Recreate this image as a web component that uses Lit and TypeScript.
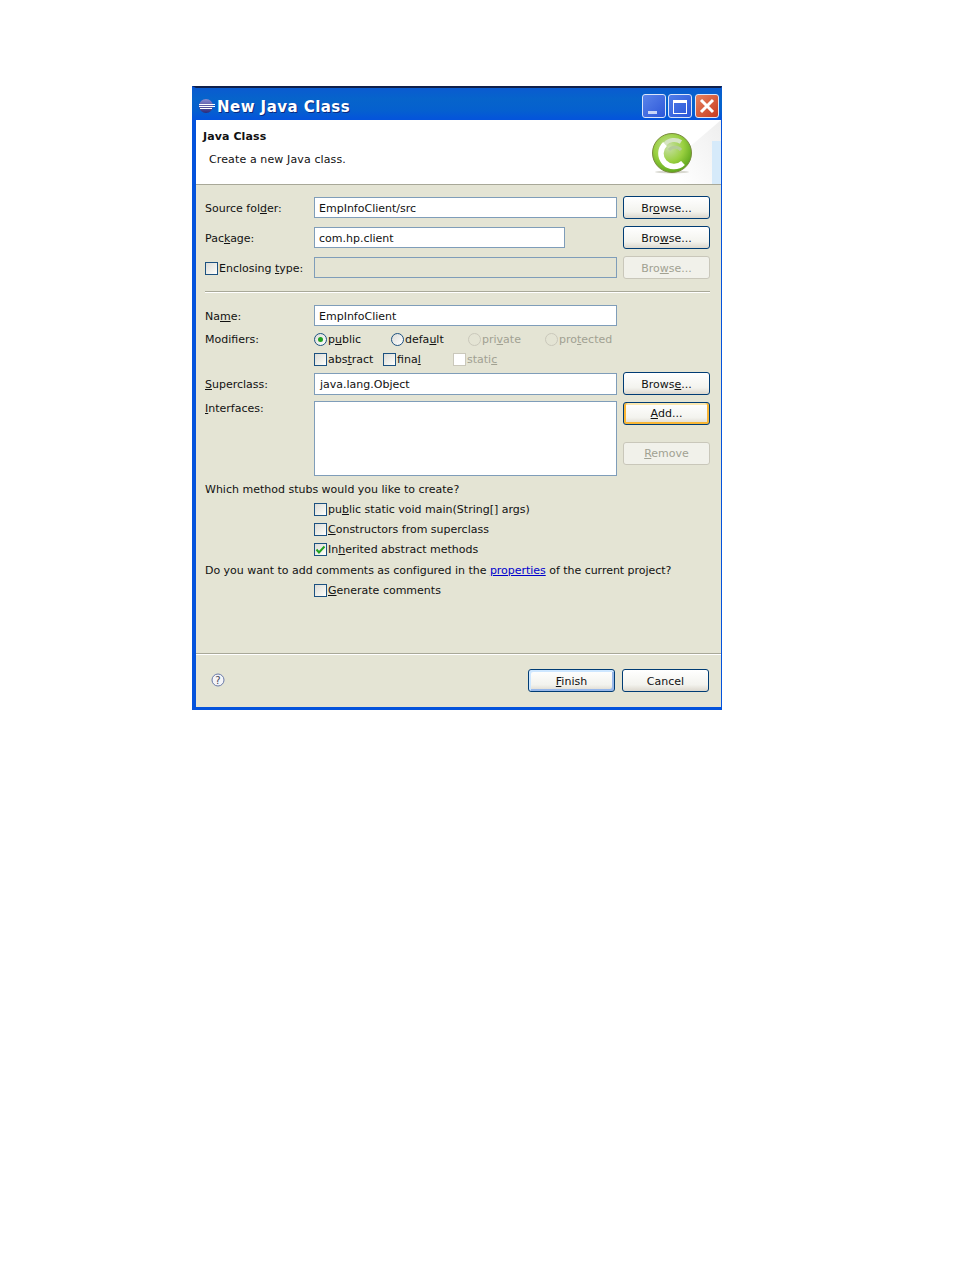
import { LitElement, html, css, svg } from "lit";
import { customElement } from "lit/decorators.js";

const lbl = (before: string, u: string, after: string) => html`<span>${before}<u>${u}</u>${after}</span>`;

const chk = (checked = false, disabled = false) => html`<span class="chk ${disabled ? "dis" : ""}">${checked
  ? svg`<svg width="11" height="11" viewBox="0 0 11 11"><path d="M1.5 5.5 L4 8.5 L9.5 2.5" fill="none" stroke="#21a121" stroke-width="2"/></svg>`
  : ""}</span>`;

const radio = (checked = false, disabled = false) => html`<span class="radio ${disabled ? "dis" : ""}">${checked ? html`<span class="dot"></span>` : ""}</span>`;

@customElement("app-root")
export class AppRoot extends LitElement {
  static styles = css`
    :host { display: block; width: 954px; height: 1270px; background: #fff; font-family: "DejaVu Sans", sans-serif; font-size: 11px; color: #111; overflow: hidden; }
    .window { margin: 86px 0 0 192px; width: 530px; height: 624px; box-sizing: border-box; display: flex; flex-direction: column; background: #e4e4d4; border-left: 4px solid #0453dc; border-right: 1px solid #0453dc; border-bottom: 3px solid #0453dc; border-top: 2px solid #10204a; }
    .title { height: 32px; margin-left: -4px; margin-right: -1px; padding: 3px 3px 0 7px; box-sizing: border-box; display: flex; align-items: center; background: linear-gradient(180deg, #0a5bd0 0%, #0664cb 35%, #0560cf 70%, #0453dc 100%); flex: none; }
    .title .t { font-weight: 700; font-size: 15px; letter-spacing: 0.45px; padding-top: 2px; color: #fff; text-shadow: 1px 1px 0 #0a2a80; flex: 1; white-space: nowrap; margin-left: 1px; }
    .wb { width: 24px; height: 24px; box-sizing: border-box; border: 1px solid #dce6fa; border-radius: 3px; display: flex; flex: none; margin-left: 2px; }
    .wb svg { display: block; }
    .wb.min { background: linear-gradient(135deg, #5a84ea, #2d57d8); }
    .wb.max { background: linear-gradient(135deg, #4f7ce8, #2a56d8); margin-right: 1px; }
    .wb.close { background: linear-gradient(135deg, #e8835f, #c63a20); }
    .banner { height: 65px; background: #fff; border-bottom: 1px solid #a8a898; box-sizing: border-box; position: relative; flex: none; padding: 8px 0 0 7px; overflow: hidden; }
    .banner .h { font-weight: 700; font-size: 11px; line-height: 18px; letter-spacing: .1px; }
    .banner .s { margin: 5px 0 0 6px; line-height: 18px; letter-spacing: .12px; }
    .banner svg { position: absolute; right: 0; top: 0; }
    .form { flex: none; padding: 12px 11px 0 9px; display: grid; grid-template-columns: 103px 303px 87px; column-gap: 6px; }
    .form > .l { display: flex; align-items: center; white-space: nowrap; padding-top: 1px; box-sizing: border-box; }
    .input { box-sizing: border-box; height: 21px; border: 1px solid #7f9db9; background: #fff; padding: 1px 4px 0; display: flex; align-items: center; white-space: nowrap; }
    .input.off { background: #e4e4d4; }
    .input.short { width: 251px; }
    .input.tall { height: 22px; margin-top: 4px; padding-left: 5px; }
    .btn { box-sizing: border-box; height: 23px; padding-top: 1px; border: 1px solid #003c74; border-radius: 3px; background: linear-gradient(180deg, #fff 0%, #f3f3ee 70%, #dcd8ce 100%); display: flex; align-items: center; justify-content: center; white-space: nowrap; color: #111; }
    .btn.r { margin: -1px 0 8px; }
    .btn.sup { margin-top: 3px; }
    .btn.off { border-color: #c9c7ba; color: #a1a192; background: #f1f1ea; }
    .btn.focus { box-shadow: inset 2px 0 0 #f8b636, inset -2px 0 0 #f8b636, inset 0 -2px 0 #f8b636, inset 0 2px 0 #fce8b0; }
    .btn.def { box-shadow: inset 2px 2px 0 #cee7ff, inset -2px -2px 0 #98b8ea; }
    .off-t { color: #a1a192; }
    .l.r, .input.r { margin-bottom: 9px; }
    .sep { grid-column: 1 / -1; height: 2px; background: linear-gradient(180deg, #a8a898 50%, #fff 50%); margin: 4px 0 12px; }
    .mods { grid-column: 2 / -1; display: flex; align-items: center; height: 20px; white-space: nowrap; }
    .mt3 { margin-top: 3px; }
    .mt4 { margin-top: 4px; }
    .opt { display: inline-flex; align-items: center; gap: 1px; white-space: nowrap; }
    .w77 { width: 77px; }
    .w69 { width: 69px; }
    .w70 { width: 70px; }
    .chk { display: inline-flex; align-items: center; justify-content: center; width: 13px; height: 13px; box-sizing: border-box; border: 1px solid #1c5180; background: linear-gradient(135deg, #dcdcd7 0%, #f4f4f0 70%, #fff 100%); flex: none; }
    .chk.dis { border-color: #cac8bb; background: #fff; }
    .radio { display: inline-flex; align-items: center; justify-content: center; width: 13px; height: 13px; box-sizing: border-box; border: 1px solid #1c5180; border-radius: 50%; background: linear-gradient(135deg, #dcdcd7 0%, #fff 100%); flex: none; }
    .radio.dis { border-color: #cac8bb; background: #e4e4d4; }
    .dot { width: 5px; height: 5px; border-radius: 50%; background: #21a121; }
    .iface { box-sizing: border-box; height: 75px; border: 1px solid #7f9db9; background: #fff; margin-top: 6px; }
    .l.il { margin-top: 6px; align-items: flex-start; line-height: 14px; }
    .side { display: flex; flex-direction: column; gap: 17px; padding-top: 1px; margin-top: 6px; }
    .side .btn { padding-top: 0; }
    .full { grid-column: 1 / -1; white-space: nowrap; height: 20px; display: flex; align-items: center; }
    .full.w { margin-top: 3px; }
    .full.d { margin-top: 1px; display: block; line-height: 22px; letter-spacing: -0.03px; }
    .full a { color: #00c; text-decoration: underline; }
    .sub { grid-column: 2 / -1; height: 20px; display: flex; align-items: center; }
    .spacer { flex: 1; }
    .fsep { height: 2px; background: linear-gradient(180deg, #a8a898 50%, #fff 50%); flex: none; }
    .foot { height: 52px; flex: none; display: flex; align-items: flex-start; padding: 14px 12px 0 15px; box-sizing: border-box; gap: 7px; }
    .foot .btn { width: 87px; }
    .help { margin-top: 4px; flex: none; }
  `;

  render() {
    return html`<div class="window">
      <div class="title">
        <svg width="17" height="16" viewBox="0 0 17 16">
          <defs><linearGradient id="e" x1="0" y1="0" x2="0" y2="1"><stop offset="0" stop-color="#8a8ad0"/><stop offset="1" stop-color="#2c2a78"/></linearGradient></defs>
          <circle cx="7" cy="8" r="7" fill="url(#e)"/>
          <path d="M0 6.5h16M0 8.5h16M1 10.5h12" stroke="#fff" stroke-width="1" />
        </svg>
        <span class="t">New Java Class</span>
        <span class="wb min"><svg width="22" height="22"><rect x="5" y="16" width="9" height="3" fill="#c9d6f8"/></svg></span>
        <span class="wb max"><svg width="22" height="22"><rect x="4.5" y="5.5" width="13" height="13" fill="none" stroke="#fff"/><rect x="4" y="5" width="14" height="3" fill="#fff"/></svg></span>
        <span class="wb close"><svg width="22" height="22"><path d="M5 5 L17 17 M17 5 L5 17" stroke="#fff" stroke-width="3"/></svg></span>
      </div>
      <div class="banner">
        <div class="h">Java Class</div>
        <div class="s">Create a new Java class.</div>
        <svg width="90" height="64" viewBox="0 0 90 64">
          <defs>
            <radialGradient id="g" cx=".42" cy=".35" r=".75"><stop offset="0" stop-color="#c8dfa8"/><stop offset=".5" stop-color="#9ad040"/><stop offset="1" stop-color="#4b9a10"/></radialGradient>
            <linearGradient id="bg" x1="0" y1="1" x2="1" y2="0"><stop offset="0" stop-color="#fff"/><stop offset="1" stop-color="#eeeeee"/></linearGradient>
          </defs>
          <path d="M48 64 L48 36 L90 0 L90 64 Z" fill="url(#bg)"/>
          <rect x="81" y="21" width="9" height="43" fill="#d6eafa"/>
          <ellipse cx="41" cy="52" rx="17" ry="1.5" fill="#d8d8d0"/>
          <circle cx="41" cy="33" r="19.5" fill="url(#g)" stroke="#7a8a40" stroke-width="1"/>
          <path d="M50 22 A12.5 12.5 0 0 0 34 24" fill="none" stroke="#d6e4c4" stroke-width="4"/>
          <path d="M34 24 A12.5 12.5 0 0 0 52 43" fill="none" stroke="#fff" stroke-width="5.5"/>
          <path d="M50 30 A8 8 0 0 0 38 30" fill="none" stroke="#b5cc98" stroke-width="3"/>
        </svg>
      </div>
      <div class="form">
        <div class="l r">${lbl("Source fol", "d", "er:")}</div>
        <div class="input r">EmpInfoClient/src</div>
        <div class="btn r">${lbl("Br", "o", "wse...")}</div>

        <div class="l r">${lbl("Pac", "k", "age:")}</div>
        <div class="r"><div class="input short">com.hp.client</div></div>
        <div class="btn r">${lbl("Bro", "w", "se...")}</div>

        <div class="l r"><span class="opt">${chk()}${lbl("Enclosing ", "t", "ype:")}</span></div>
        <div class="input off r"></div>
        <div class="btn off r">${lbl("Bro", "w", "se...")}</div>

        <div class="sep"></div>

        <div class="l">${lbl("Na", "m", "e:")}</div>
        <div class="input">EmpInfoClient</div>
        <div></div>

        <div class="l mt3">Modifiers:</div>
        <div class="mods mt3">
          <span class="opt w77">${radio(true)}${lbl("p", "u", "blic")}</span>
          <span class="opt w77">${radio()}${lbl("defa", "u", "lt")}</span>
          <span class="opt off-t w77">${radio(false, true)}${lbl("pri", "v", "ate")}</span>
          <span class="opt off-t">${radio(false, true)}${lbl("pro", "t", "ected")}</span>
        </div>

        <div></div>
        <div class="mods">
          <span class="opt w69">${chk()}${lbl("abs", "t", "ract")}</span>
          <span class="opt w70">${chk()}${lbl("fina", "l", "")}</span>
          <span class="opt off-t">${chk(false, true)}${lbl("stati", "c", "")}</span>
        </div>

        <div class="l mt4">${lbl("", "S", "uperclass:")}</div>
        <div class="input tall">java.lang.Object</div>
        <div class="btn sup">${lbl("Brows", "e", "...")}</div>

        <div class="l il">${lbl("", "I", "nterfaces:")}</div>
        <div class="iface"></div>
        <div class="side">
          <div class="btn focus">${lbl("", "A", "dd...")}</div>
          <div class="btn off">${lbl("", "R", "emove")}</div>
        </div>

        <div class="full w">Which method stubs would you like to create?</div>
        <div class="sub"><span class="opt">${chk()}${lbl("pu", "b", "lic static void main(String[] args)")}</span></div>
        <div class="sub"><span class="opt">${chk()}${lbl("", "C", "onstructors from superclass")}</span></div>
        <div class="sub"><span class="opt">${chk(true)}${lbl("In", "h", "erited abstract methods")}</span></div>
        <div class="full d">Do you want to add comments as configured in the <a>properties</a> of the current project?</div>
        <div class="sub"><span class="opt">${chk()}${lbl("", "G", "enerate comments")}</span></div>
      </div>
      <div class="spacer"></div>
      <div class="fsep"></div>
      <div class="foot">
        <svg class="help" width="14" height="14" viewBox="0 0 14 14"><circle cx="7" cy="7" r="6" fill="#f4f4f8" stroke="#6a7aa8"/><text x="7" y="11" text-anchor="middle" font-size="10" font-family="DejaVu Sans" fill="#445">?</text></svg>
        <div class="spacer"></div>
        <div class="btn def">${lbl("", "F", "inish")}</div>
        <div class="btn">Cancel</div>
      </div>
    </div>`;
  }
}
